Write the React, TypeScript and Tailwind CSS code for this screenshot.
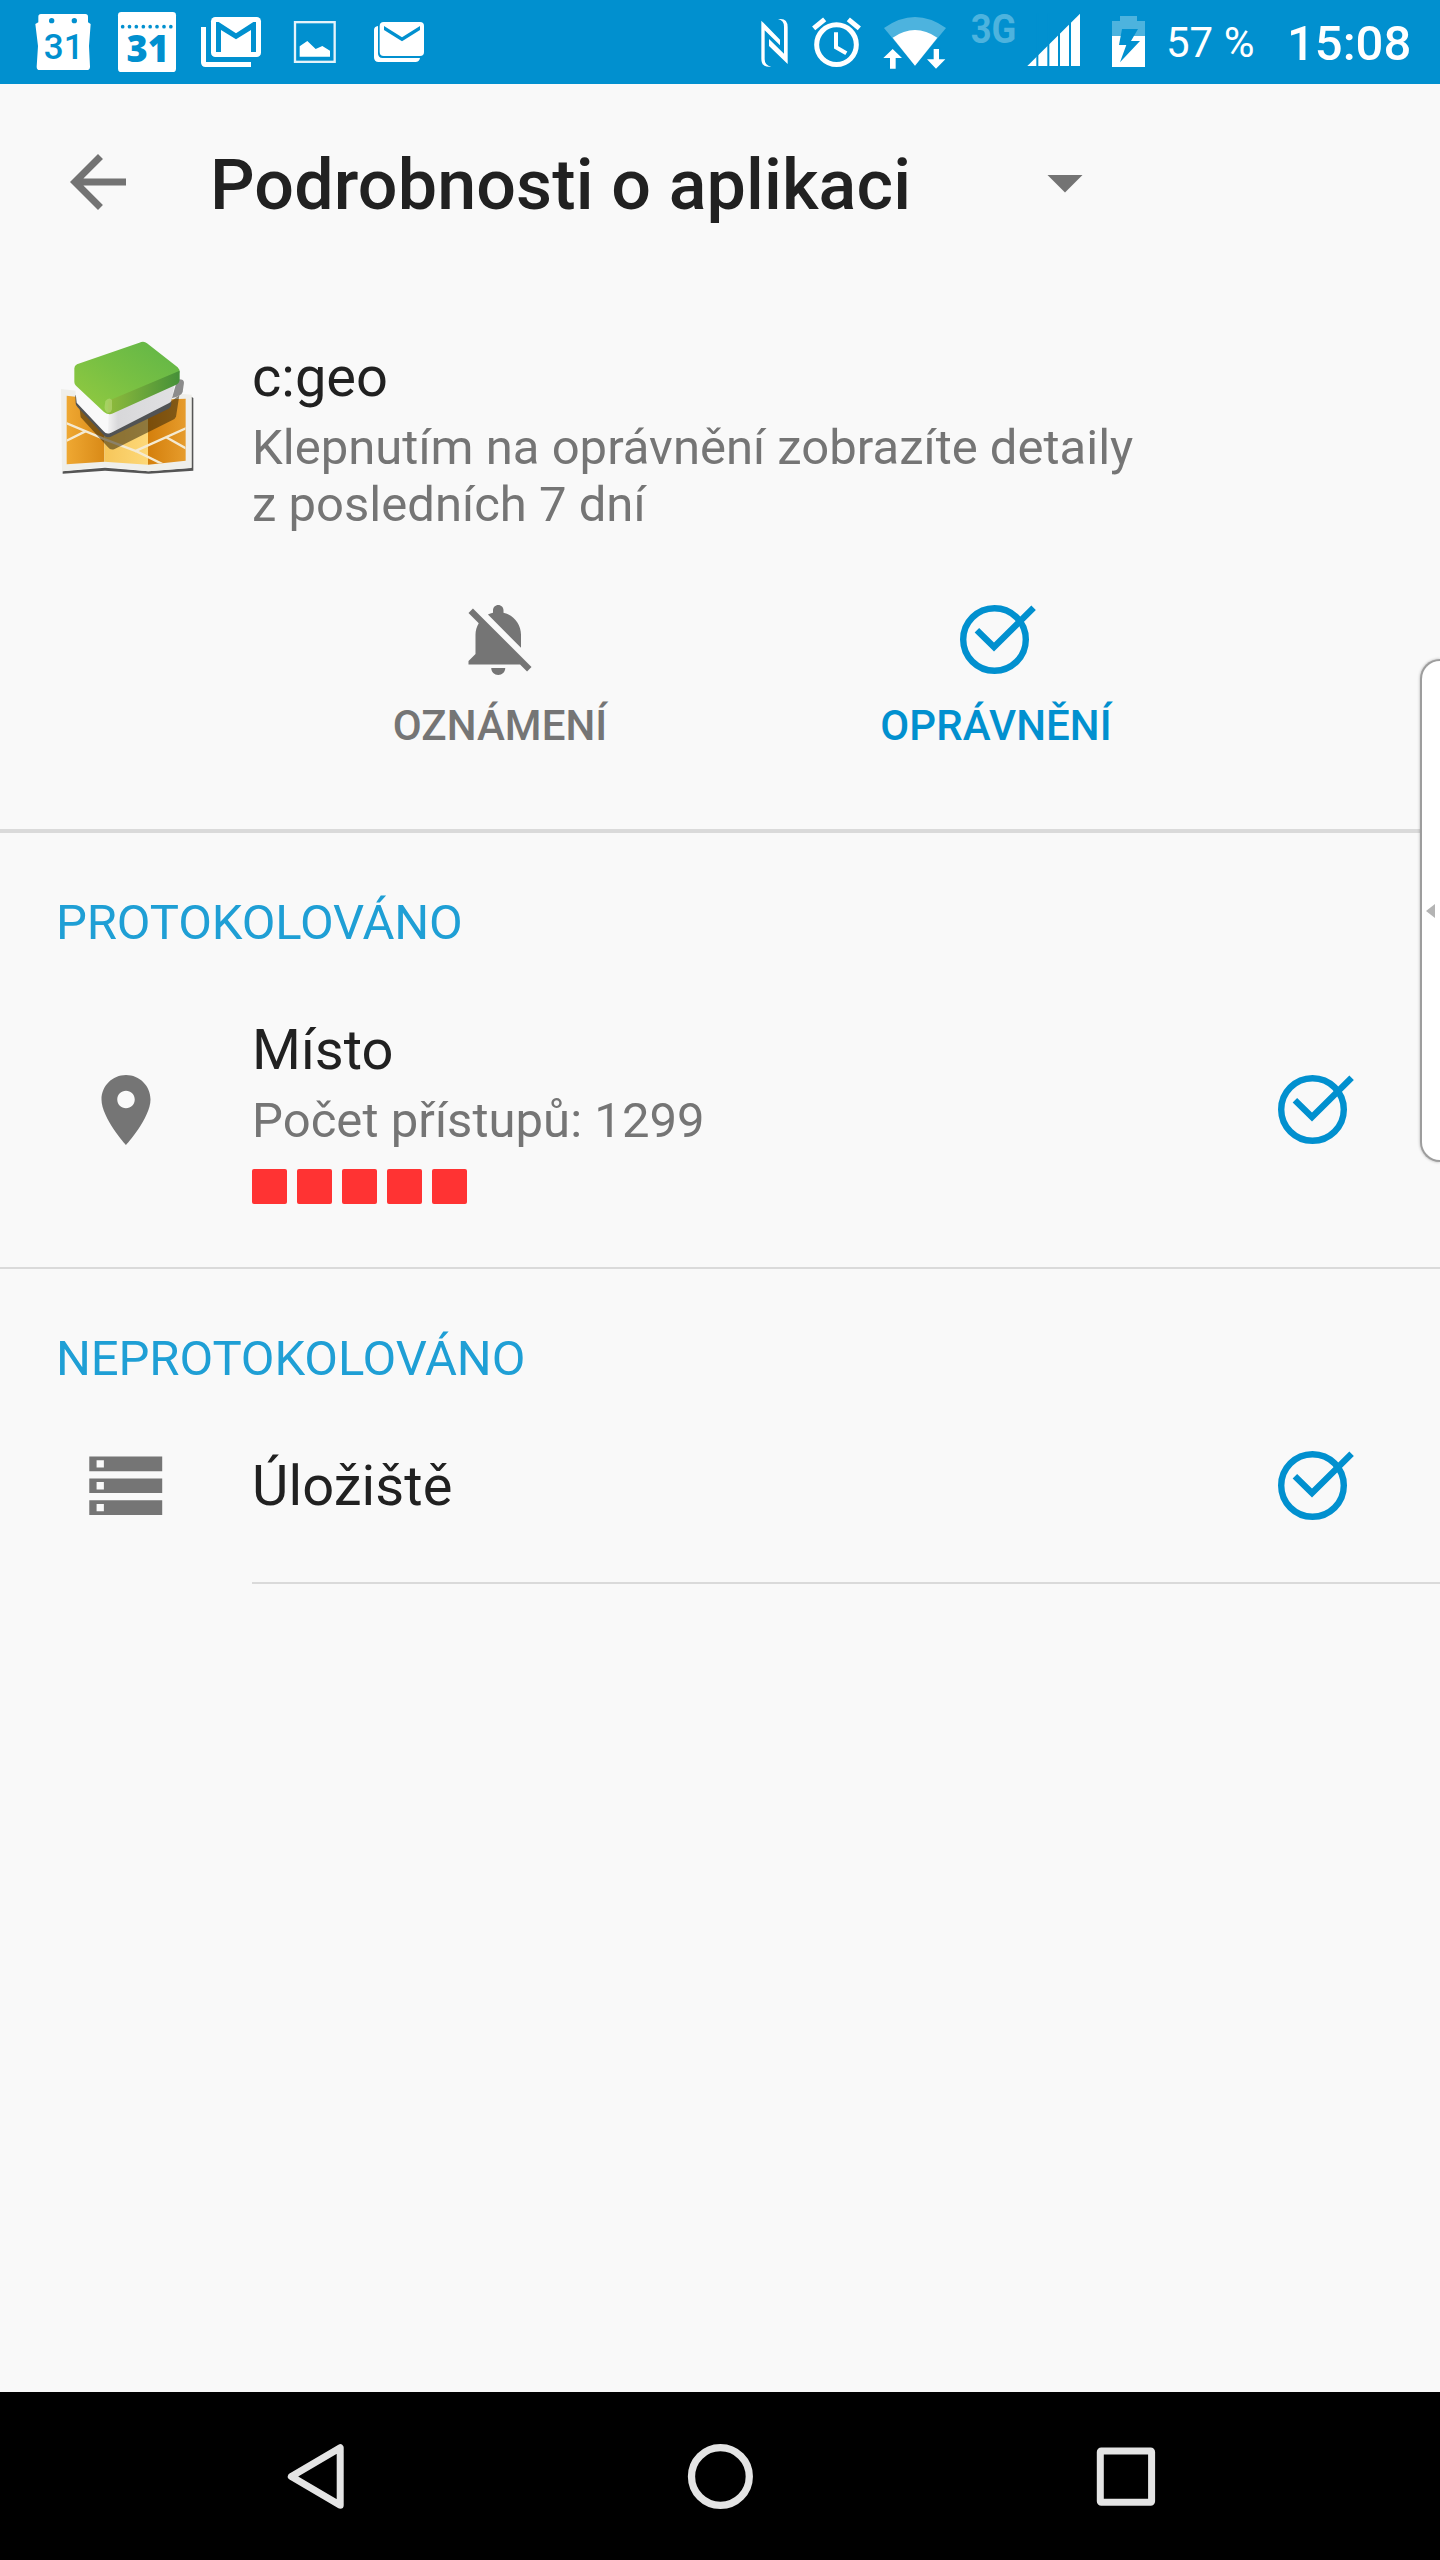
import type { ReactNode } from "react";

const BLUE = "#0190cf";

const accessLevel = [1, 2, 3, 4, 5];
const calendarDots = [368, 388.5, 409, 430, 450.5, 471, 492, 512.5];

/* ---------- status bar icons ---------- */

function CalendarIcon() {
  return (
    <svg className="ml-[35px] h-21 w-[57px]" viewBox="105 0 171 252">
      <path
        fill="#fff"
        d="M123 42H256Q264 42 264 50V67L272 72L267 138L270 200Q270 210 260 210H119Q110 210 110 200L114 138L106 72L115 67V50Q115 42 123 42Z"
      />
      <circle cx="155" cy="62" r="8" fill={BLUE} />
      <circle cx="223" cy="62" r="8" fill={BLUE} />
      <text x="191" y="176" textAnchor="middle" fontSize="105" fontWeight="500" fill={BLUE}>
        31
      </text>
    </svg>
  );
}

function CalendarDayIcon() {
  return (
    <svg className="ml-[25px] h-21 w-[60px]" viewBox="351 0 180 252">
      <rect x="354" y="36" width="174" height="180" rx="10" fill="#fff" />
      {calendarDots.map((x) => (
        <circle key={x} cx={x} cy="80" r="5.5" fill={BLUE} />
      ))}
      <text
        x="443"
        y="187"
        textAnchor="middle"
        fontSize="109"
        fontWeight="800"
        fill={BLUE}
        className="font-['Open_Sans',sans-serif]"
      >
        31
      </text>
    </svg>
  );
}

function GmailIcon() {
  return (
    <svg className="ml-[23px] h-21 w-[62px]" viewBox="600 0 186 252">
      <rect x="633" y="51" width="150" height="120" rx="13" fill="#fff" />
      <path fill={BLUE} d="M648 156V66H656L708 100L760 66H768V156H753V90L708 118L663 90V156Z" />
      <path fill="#fff" d="M603 81H618V186H753V201H617Q603 201 603 187Z" />
    </svg>
  );
}

function PictureIcon() {
  return (
    <svg className="ml-[31px] h-21 w-[43px]" viewBox="879 0 129 252">
      <rect x="885" y="66.5" width="119" height="119" fill="none" stroke="#e4f3fa" strokeWidth="7" />
      <path fill="#fff" d="M899 170V139L922 123L947 147L967 138L990 152V170Z" />
    </svg>
  );
}

function MailStackIcon() {
  return (
    <svg className="ml-[37px] h-21 w-[52px]" viewBox="1119 0 156 252">
      <path fill="#fff" d="M1134 78Q1122 80 1122 90V172Q1122 186 1136 186H1246Q1258 186 1260 174H1148Q1134 174 1134 160Z" />
      <rect x="1139" y="66" width="133" height="102" rx="12" fill="#fff" />
      <path fill={BLUE} d="M1152 78L1206 112L1260 78V90L1206 124L1152 90Z" />
    </svg>
  );
}

function NfcIcon() {
  return (
    <svg className="h-21 w-[29px]" viewBox="120 0 87 252">
      <path fill="#fff" d="M124 62L180 119V136L134 91V178Q134 197 154 200Q124 204 124 176Z" />
      <path fill="#fff" d="M203 192L147 138V117L192 161V80Q192 61 174 58Q203 53 203 82Z" />
    </svg>
  );
}

function AlarmIcon() {
  return (
    <svg className="ml-[22px] h-21 w-[51px]" viewBox="273 0 153 252" fill="none" stroke="#fff">
      <circle cx="349.5" cy="134" r="59.5" strokeWidth="15" />
      <path strokeWidth="15" d="M281 85L314 58M418 85L385 58" />
      <path strokeWidth="12" d="M348 97V142L379 160" />
    </svg>
  );
}

function WifiIcon() {
  return (
    <svg className="ml-[20px] h-21 w-[65px]" viewBox="486 0 195 252">
      <path fill="#4db3de" d="M492 84Q585 18 678 84L585 197Z" />
      <path fill="#fff" d="M518 113Q585 67 652 113L585 197Z" />
      <path fill="#fff" stroke={BLUE} strokeWidth="8" paintOrder="stroke" d="M518 147L546 174H527V206H510V174H490Z" />
      <path fill="#fff" stroke={BLUE} strokeWidth="8" paintOrder="stroke" d="M641 147H657V178H676L648 206L621 178H641Z" />
    </svg>
  );
}

function NetworkTypeIcon() {
  return (
    <svg className="ml-[20px] h-21 w-[54px]" viewBox="741 0 162 252">
      <text x="752" y="128" fontSize="124" fontWeight="700" fill="#4db3de" textLength="137" lengthAdjust="spacingAndGlyphs">
        3G
      </text>
    </svg>
  );
}

function SignalIcon() {
  return (
    <svg className="ml-[6px] h-21 w-[54px]" viewBox="921 0 162 252">
      <path fill="#fff" d="M922 198L1080 41V198Z" />
      <path stroke={BLUE} strokeWidth="6" d="M952 40V200M985 40V200M1017 40V200M1050 40V200" />
    </svg>
  );
}

function BatteryIcon() {
  return (
    <svg className="ml-[30px] h-21 w-[35px]" viewBox="153 0 105 252">
      <path fill="#4db3de" d="M156 108V63H180V48H231V63H255V108Z" />
      <path fill="#fff" d="M156 108H255V201H156Z" />
      <path fill={BLUE} d="M186 87H234L213 123H240L180 187L199 135H177Z" />
    </svg>
  );
}

function StatusBar() {
  return (
    <div className="flex h-21 items-center bg-[#0190cf] text-white">
      <CalendarIcon />
      <CalendarDayIcon />
      <GmailIcon />
      <PictureIcon />
      <MailStackIcon />
      <div className="ml-auto flex items-center pr-7">
        <NfcIcon />
        <AlarmIcon />
        <WifiIcon />
        <NetworkTypeIcon />
        <SignalIcon />
        <BatteryIcon />
        <span className="ml-5 w-[92px] text-[42px] leading-[49px] whitespace-nowrap">57 %</span>
        <span className="mt-[2px] ml-[29px] w-[125px] text-[49px] leading-[57px] font-medium">15:08</span>
      </div>
    </div>
  );
}

/* ---------- content icons ---------- */

function CheckCircle() {
  return (
    <svg className="size-21 shrink-0" viewBox="0 0 84 84" fill="none" stroke={BLUE} strokeWidth="6.4">
      <circle cx="40.5" cy="41.5" r="31.3" />
      <path d="M22.9 32.3L40 49.1L79.6 9.8" />
    </svg>
  );
}

function BellOffIcon() {
  return (
    <svg className="size-21" viewBox="0 0 24 24" fill="#757575">
      <path d="M11.5 22c1.1 0 2-.9 2-2h-4c0 1.1.9 2 2 2zM18 10.5c0-3.07-2.13-5.64-5-6.32V3.5c0-.83-.67-1.5-1.5-1.5S10 2.67 10 3.5v.68c-.51.12-.99.32-1.45.56L18 14.18V10.5zm-.27 8.5l2 2L21 19.73 4.27 3 3 4.27l2.92 2.92C5.34 8.16 5 9.29 5 10.5V16l-2 2v1h14.73z" />
    </svg>
  );
}

function PinIcon() {
  return (
    <svg className="size-21" viewBox="0 0 24 24" fill="#757575">
      <path d="M12 2C8.13 2 5 5.13 5 9c0 5.25 7 13 7 13s7-7.75 7-13c0-3.87-3.13-7-7-7zm0 9.5c-1.38 0-2.5-1.12-2.5-2.5s1.12-2.5 2.5-2.5 2.5 1.12 2.5 2.5-1.12 2.5-2.5 2.5z" />
    </svg>
  );
}

function StorageIcon() {
  return (
    <svg className="size-[87.5px]" viewBox="0 0 24 24" fill="#757575">
      <path d="M2 20h20v-4H2v4zm2-3h2v2H4v-2zM2 4v4h20V4H2zm4 3H4V5h2v2zm-4 7h20v-4H2v4zm2-3h2v2H4v-2z" />
    </svg>
  );
}

function AppLogo() {
  return (
    <svg className="size-36 shrink-0" viewBox="48 48 432 432">
      <defs>
        <linearGradient id="cover" x1="0" y1="1" x2="1" y2="0">
          <stop offset="0" stopColor="#96cb40" />
          <stop offset="0.5" stopColor="#78c043" />
          <stop offset="1" stopColor="#5fb548" />
        </linearGradient>
        <linearGradient id="coverSide" x1="0" y1="0" x2="1" y2="0">
          <stop offset="0" stopColor="#8fbb3c" />
          <stop offset="1" stopColor="#459038" />
        </linearGradient>
        <linearGradient id="foldLeft" x1="0" y1="0" x2="1" y2="0">
          <stop offset="0" stopColor="#efa832" />
          <stop offset="1" stopColor="#d98a17" />
        </linearGradient>
        <linearGradient id="foldMid" x1="0" y1="0" x2="1" y2="0">
          <stop offset="0" stopColor="#f6c65a" />
          <stop offset="1" stopColor="#fdd878" />
        </linearGradient>
        <linearGradient id="foldRight" x1="0" y1="0" x2="1" y2="0">
          <stop offset="0" stopColor="#d47f0c" />
          <stop offset="1" stopColor="#e69c2c" />
        </linearGradient>
        <linearGradient id="pages" x1="0" y1="0" x2="1" y2="0">
          <stop offset="0" stopColor="#f2f2f2" />
          <stop offset="0.15" stopColor="#d8d8da" />
          <stop offset="1" stopColor="#e0e0e2" />
        </linearGradient>
        <clipPath id="mapArea">
          <path d="M80 227L193 240L324 240L437 236V422L324 434L193 425L80 433Z" />
        </clipPath>
      </defs>

      {/* folded map */}
      <path fill="#555" d="M68 454L195 443L326 454L454 444V230L460 234V452L326 461L195 452L68 461Z" />
      <path fill="#efefeb" d="M63 207L193 222H430L455 224V443L324 454L193 440L66 454Z" />
      <path fill="url(#foldLeft)" d="M80 227L193 240V425L80 433Z" />
      <path fill="url(#foldMid)" d="M193 240H324V434L193 425Z" />
      <path fill="url(#foldRight)" d="M324 240L437 236V422L324 434Z" />
      <g clipPath="url(#mapArea)" stroke="#f4ead2" strokeWidth="7" fill="none">
        <path d="M76 308L195 358L290 394L375 436M76 364L136 334M284 394L440 324M376 350L440 386" />
      </g>

      {/* shadow of the book */}
      <path fill="#2a2008" fillOpacity="0.52" d="M118 258L200 345L392 245L418 226L408 290Q405 297 396 301L224 387Q212 392 204 382L122 292Z" />
      <path fill="#8c8c8c" d="M412 178Q432 176 432 188L428 216Q424 228 396 234Z" />

      {/* book */}
      <path fill="#515354" d="M106 225L200 335L394 235V252Q393 262 386 266L218 347Q203 356 193 347L113 262Q107 257 107 250Z" />
      <path fill="#f9f9f9" d="M104 190L212 275V338Q200 345 190 333L110 248Z" />
      <path fill="url(#pages)" d="M206 275L404 193L394 242Q392 247 386 250L218 336Q210 341 204 338Z" />
      <path fill="url(#cover)" d="M103 145Q103 137 111 133L298 68Q312 62 321 70L413 142Q420 148 418 158L414 168L216 245L210 283Q200 283 192 276L108 197Q103 192 103 186Z" />
      <path fill="url(#coverSide)" d="M216 238L419 152V177Q419 190 407 195L216 281Q207 285 203 278L206 240Z" />
      <path fill="#b9d978" fillOpacity="0.6" d="M196 243Q207 229 216 240V268Q212 281 202 278Q192 270 194 257Z" />
    </svg>
  );
}

/* ---------- page parts ---------- */

function Toolbar() {
  return (
    <div className="flex h-49 items-center pl-14">
      <svg className="size-21" viewBox="0 0 24 24" fill="#737373">
        <path d="M20 11H7.83l5.59-5.59L12 4l-8 8 8 8 1.41-1.41L7.83 13H20v-2z" />
      </svg>
      <h1 className="mt-[6px] ml-[70px] w-[813px] text-[70px] leading-[82px] font-medium tracking-[0.14px] whitespace-nowrap text-[#212121]">
        Podrobnosti o aplikaci
      </h1>
      <svg className="size-21" viewBox="0 0 24 24" fill="#737373">
        <path d="M7 10l5 5 5-5z" />
      </svg>
    </div>
  );
}

function AppInfo() {
  return (
    <div className="flex h-[318px] pt-14 pl-14">
      <AppLogo />
      <div className="ml-[52px] pt-2">
        <p className="text-[56px] leading-[66px]">c:geo</p>
        <p className="mt-[9px] text-[49px] leading-[57px] tracking-[0.02px] text-[#757575]">
          Klepnutím na oprávnění zobrazíte detaily
          <br />z posledních 7 dní
        </p>
      </div>
    </div>
  );
}

function Tab({ icon, label, active }: { icon: ReactNode; label: string; active?: boolean }) {
  return (
    <div className="flex w-124 flex-col items-center">
      {icon}
      <span
        className={`mt-[19px] text-[42px] leading-[49px] font-medium tracking-[0.08px] ${active ? "text-[#0190cf]" : "text-[#757575]"}`}
      >
        {label}
      </span>
    </div>
  );
}

function SectionTitle({ children }: { children: ReactNode }) {
  return (
    <h2 className="pt-[61px] pl-14 text-[49px] leading-[57px] tracking-[-0.12px] text-[#1f9fd5]">{children}</h2>
  );
}

function NavBar() {
  return (
    <div className="flex h-42 items-center justify-center gap-[321px] bg-black">
      <svg className="size-21" viewBox="0 0 84 84" fill="none" stroke="#e4e4e4" strokeWidth="7" strokeLinejoin="round">
        <path d="M67.2 13.7V71.3L18.3 42.5Z" />
      </svg>
      <svg className="size-21" viewBox="0 0 84 84" fill="none" stroke="#e4e4e4" strokeWidth="7.3">
        <circle cx="42.4" cy="42.5" r="28.9" />
      </svg>
      <svg className="size-21" viewBox="0 0 84 84" fill="none" stroke="#e4e4e4" strokeWidth="7">
        <rect x="17.3" y="16.9" width="51.3" height="51.3" rx="1" />
      </svg>
    </div>
  );
}

export default function App() {
  return (
    <div className="relative flex h-[2560px] w-[1440px] flex-col overflow-hidden bg-[#f9f9f9] font-[Roboto,sans-serif] text-[#212121]">
      <StatusBar />
      <Toolbar />
      <AppInfo />

      <div className="flex h-[231px] pl-63">
        <Tab icon={<BellOffIcon />} label="OZNÁMENÍ" />
        <Tab icon={<CheckCircle />} label="OPRÁVNĚNÍ" active />
      </div>

      <section className="h-[440px] border-b-2 border-[#dadada]">
        <div className="h-1 bg-[#dadada]" />
        <SectionTitle>PROTOKOLOVÁNO</SectionTitle>
        <div className="mt-[66px] flex h-[187px]">
          <div className="flex w-63 items-center justify-center pb-[1px]">
            <PinIcon />
          </div>
          <div className="flex-1">
            <p className="text-[56px] leading-[66px]">Místo</p>
            <p className="mt-[9px] text-[49px] leading-[57px] tracking-[0.05px] text-[#757575]">Počet přístupů: 1299</p>
            <div className="mt-5 flex gap-[10px]">
              {accessLevel.map((n) => (
                <span key={n} className="size-[35px] rounded-[2px] bg-[#ff3333]" />
              ))}
            </div>
          </div>
          <div className="flex items-center pr-21 pb-[1px]">
            <CheckCircle />
          </div>
        </div>
      </section>

      <section>
        <SectionTitle>NEPROTOKOLOVÁNO</SectionTitle>
        <div className="mt-[52px] flex h-[94px] items-center">
          <div className="flex w-63 justify-center">
            <StorageIcon />
          </div>
          <p className="flex-1 text-[56px] leading-[66px] tracking-[0.1px]">Úložiště</p>
          <div className="pr-21">
            <CheckCircle />
          </div>
        </div>
        <div className="mt-[49px] ml-63 h-0.5 bg-[#dadada]" />
      </section>

      <div className="mt-auto">
        <NavBar />
      </div>

      {/* edge handle, sits over the page */}
      <div className="absolute top-[659px] right-0 flex h-[503px] w-5 items-center rounded-l-[20px] border-y-2 border-l-2 border-[#9d9d9d] bg-white pl-1 shadow-[0_0_3px_rgba(0,0,0,0.3)]">
        <svg className="h-[14px] w-[9px]" viewBox="0 0 9 14">
          <path fill="#b4b4b4" d="M0 7L9 0V14Z" />
        </svg>
      </div>
    </div>
  );
}
